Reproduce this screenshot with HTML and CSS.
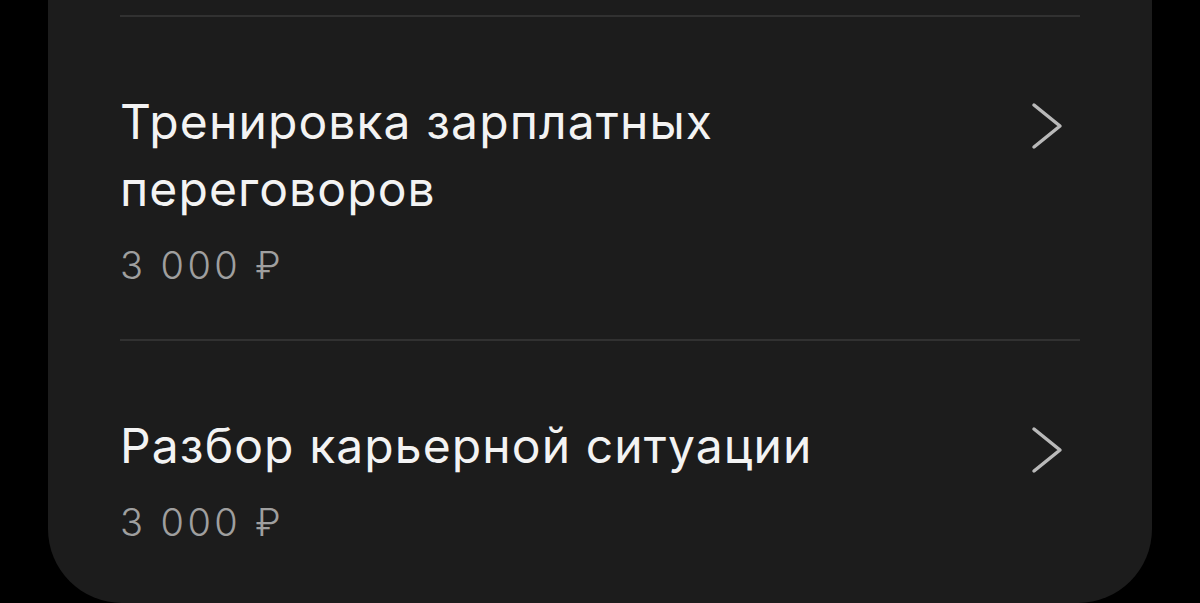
FILE: index.html
```html
<!DOCTYPE html>
<html lang="ru">
<head>
    <meta charset="UTF-8">
    <meta name="viewport" content="width=device-width, initial-scale=1.0">
    <title>Услуги</title>
    <link rel="stylesheet" href="styles.css">
</head>
<body>
    <div class="ServiceCard">
        <div class="serviceItem">
            <div class="serviceText">
                <div class="serviceTitle">Тренировка зарплатных<br>переговоров</div>
                <div class="servicePrice">3 000 ₽</div>
            </div>
            <svg class="chevron" viewBox="0 0 32 48" width="32" height="48">
                <path d="M3 3 L29 24 L3 45" />
            </svg>
        </div>
        <div class="serviceItem">
            <div class="serviceText">
                <div class="serviceTitle">Разбор карьерной ситуации</div>
                <div class="servicePrice">3 000 ₽</div>
            </div>
            <svg class="chevron" viewBox="0 0 32 48" width="32" height="48">
                <path d="M3 3 L29 24 L3 45" />
            </svg>
        </div>
    </div>
</body>
</html>
```

FILE: styles.css
```css
body {
    margin: 0;
    background: #000;
    font-family: 'Inter', 'Roboto', sans-serif;
    overflow: hidden;
}

.ServiceCard {
    margin: 0 48px;
    height: 603px;
    box-sizing: border-box;
    padding: 15px 72px 0;
    background: #1c1c1c;
    border-radius: 0 0 74px 74px; /* only the bottom of the card is rounded */
}

.serviceItem {
    display: flex;
    justify-content: space-between;
    align-items: flex-start;
    border-top: 2px solid #313131;
    padding: 71px 0 52px;
}

.serviceTitle {
    color: #f3f3f3;
    font-size: 48px;
    line-height: 67px;
    font-weight: 400;
    letter-spacing: 1.1px;
}

.servicePrice {
    margin-top: 21px;
    color: #9f9f9f;
    font-size: 38px;
    line-height: 44px;
    font-weight: 300;
    letter-spacing: 3.4px;
}

.chevron {
    flex-shrink: 0;
    margin: 14px 17px 0 0;
}

.chevron path {
    fill: none;
    stroke: #b9b9b9;
    stroke-width: 3.5;
    stroke-linecap: round;
    stroke-linejoin: round;
}
```
